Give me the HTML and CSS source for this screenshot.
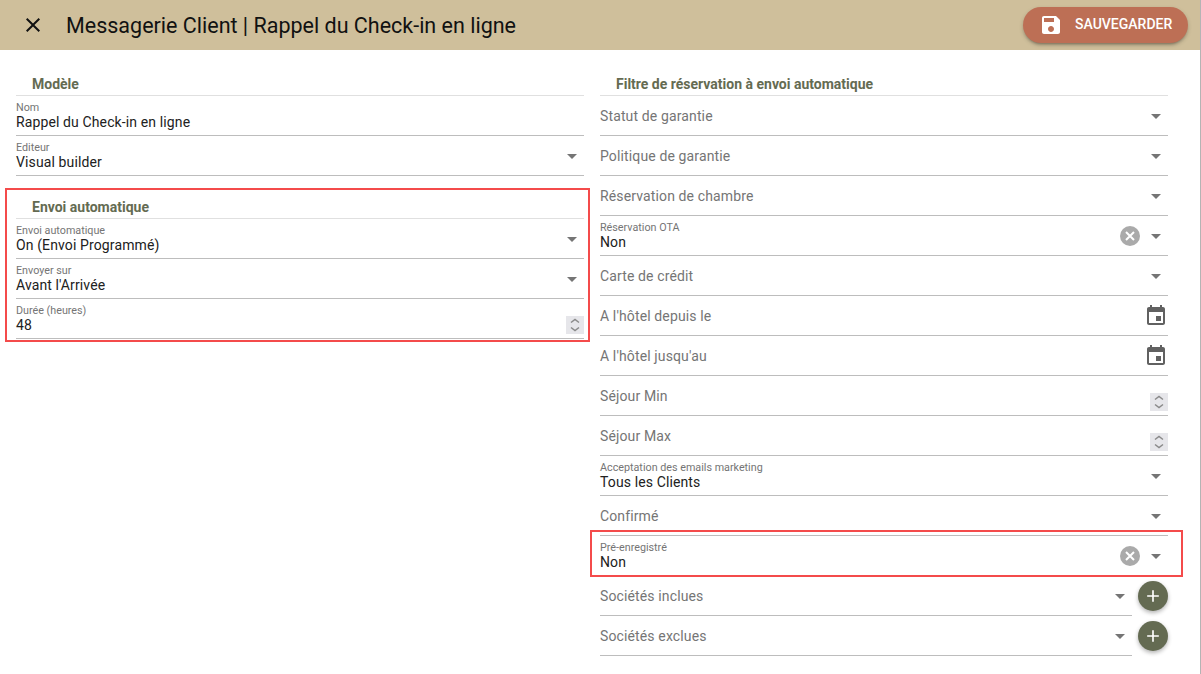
FILE: index.html
```html
<!DOCTYPE html>
<html lang="fr">
<head>
  <meta charset="UTF-8">
  <title>Messagerie Client | Rappel du Check-in en ligne</title>
  <link rel="stylesheet" href="styles.css">
</head>
<body>
  <header class="topbar">
    <svg class="close-icon" viewBox="0 0 24 24"><path d="M19 6.41 17.59 5 12 10.59 6.41 5 5 6.41 10.59 12 5 17.59 6.41 19 12 13.41 17.59 19 19 17.59 13.41 12z"/></svg>
    <h1>Messagerie Client | Rappel du Check-in en ligne</h1>
    <button class="save-btn">
      <svg viewBox="0 0 24 24"><path d="M17 3H5c-1.11 0-2 .9-2 2v14c0 1.1.89 2 2 2h14c1.1 0 2-.9 2-2V7l-4-4zm-5 16c-1.66 0-3-1.34-3-3s1.34-3 3-3 3 1.34 3 3-1.34 3-3 3zm3-10H5V5h10v4z"/></svg>
      <span>SAUVEGARDER</span>
    </button>
  </header>

  <main class="columns">
    <div class="column">
      <h2 class="section-title">Modèle</h2>
      <div class="field">
        <div class="field-text"><label>Nom</label><span class="value">Rappel du Check-in en ligne</span></div>
      </div>
      <div class="field">
        <div class="field-text"><label>Editeur</label><span class="value">Visual builder</span></div>
        <i class="arrow"></i>
      </div>

      <section class="auto-send">
        <div class="highlight"></div>
        <h2 class="section-title">Envoi automatique</h2>
        <div class="field">
          <div class="field-text"><label>Envoi automatique</label><span class="value">On (Envoi Programmé)</span></div>
          <i class="arrow"></i>
        </div>
        <div class="field">
          <div class="field-text"><label>Envoyer sur</label><span class="value">Avant l'Arrivée</span></div>
          <i class="arrow"></i>
        </div>
        <div class="field">
          <div class="field-text"><label>Durée (heures)</label><span class="value">48</span></div>
          <div class="spinner"><svg viewBox="0 0 18 18"><path d="M5 6.500 9 3.500l4 3M5 11.500l4 3 4-3"/></svg></div>
        </div>
      </section>
    </div>

    <div class="column">
      <h2 class="section-title">Filtre de réservation à envoi automatique</h2>
      <div class="field"><span class="placeholder">Statut de garantie</span><i class="arrow"></i></div>
      <div class="field"><span class="placeholder">Politique de garantie</span><i class="arrow"></i></div>
      <div class="field"><span class="placeholder">Réservation de chambre</span><i class="arrow"></i></div>
      <div class="field">
        <div class="field-text"><label>Réservation OTA</label><span class="value">Non</span></div>
        <svg class="clear" viewBox="0 0 20 20"><circle cx="10" cy="10" r="10"/><path d="M6 6l8 8M14 6l-8 8"/></svg>
        <i class="arrow"></i>
      </div>
      <div class="field"><span class="placeholder">Carte de crédit</span><i class="arrow"></i></div>
      <div class="field">
        <span class="placeholder">A l'hôtel depuis le</span>
        <svg class="calendar" viewBox="0 0 24 24"><path d="M19 3h-1V1h-2v2H8V1H6v2H5c-1.110 0-2 .9-2 2v14c0 1.100.89 2 2 2h14c1.100 0 2-.9 2-2V5c0-1.100-.9-2-2-2zm0 16H5V8h14v11zM12 12h5v5h-5z"/></svg>
      </div>
      <div class="field">
        <span class="placeholder">A l'hôtel jusqu'au</span>
        <svg class="calendar" viewBox="0 0 24 24"><path d="M19 3h-1V1h-2v2H8V1H6v2H5c-1.110 0-2 .9-2 2v14c0 1.100.89 2 2 2h14c1.100 0 2-.9 2-2V5c0-1.100-.9-2-2-2zm0 16H5V8h14v11zM12 12h5v5h-5z"/></svg>
      </div>
      <div class="field">
        <span class="placeholder">Séjour Min</span>
        <div class="spinner"><svg viewBox="0 0 18 18"><path d="M5 6.500 9 3.500l4 3M5 11.500l4 3 4-3"/></svg></div>
      </div>
      <div class="field">
        <span class="placeholder">Séjour Max</span>
        <div class="spinner"><svg viewBox="0 0 18 18"><path d="M5 6.500 9 3.500l4 3M5 11.500l4 3 4-3"/></svg></div>
      </div>
      <div class="field">
        <div class="field-text"><label>Acceptation des emails marketing</label><span class="value">Tous les Clients</span></div>
        <i class="arrow"></i>
      </div>
      <div class="field"><span class="placeholder">Confirmé</span><i class="arrow"></i></div>
      <div class="field marked">
        <div class="highlight"></div>
        <div class="field-text"><label>Pré-enregistré</label><span class="value">Non</span></div>
        <svg class="clear" viewBox="0 0 20 20"><circle cx="10" cy="10" r="10"/><path d="M6 6l8 8M14 6l-8 8"/></svg>
        <i class="arrow"></i>
      </div>
      <div class="add-row">
        <div class="field"><span class="placeholder">Sociétés inclues</span><i class="arrow"></i></div>
        <button class="add-btn"><svg viewBox="0 0 24 24"><path d="M19 13h-6v6h-2v-6H5v-2h6V5h2v6h6z"/></svg></button>
      </div>
      <div class="add-row">
        <div class="field"><span class="placeholder">Sociétés exclues</span><i class="arrow"></i></div>
        <button class="add-btn"><svg viewBox="0 0 24 24"><path d="M19 13h-6v6h-2v-6H5v-2h6V5h2v6h6z"/></svg></button>
      </div>
    </div>
  </main>
</body>
</html>
```

FILE: styles.css
```css
* {
  box-sizing: border-box;
}
body {
  margin: 0;
  height: 674px;
  overflow: hidden;
  background: #fff;
  border-right: 1px solid #b4b4b4;
  font-family: Roboto, "Liberation Sans", sans-serif;
  color: #212121;
}
.topbar {
  height: 50px;
  background: #cfbf9b;
  display: flex;
  align-items: center;
  padding: 0 12px 0 21px;
}
.close-icon {
  width: 24px;
  height: 24px;
  fill: #111;
}
.topbar h1 {
  margin: 0 0 0 21px;
  font-size: 21.5px;
  font-weight: 400;
  color: #111;
  flex-grow: 1;
}
.save-btn {
  width: 165px;
  height: 36px;
  background: #bd6f55;
  color: #fff;
  border: none;
  border-radius: 18px;
  box-shadow: 0 3px 3px -2px rgba(0, 0, 0, 0.3), 0 2px 4px rgba(0, 0, 0, 0.2);
  display: flex;
  align-items: center;
  padding: 0 0 0 16px;
  font-family: inherit;
  font-size: 14px;
  font-weight: 500;
}
.save-btn svg {
  width: 24px;
  height: 24px;
  fill: #fff;
  margin-right: 12px;
}
.save-btn span {
  margin-bottom: 3px;
}
.columns {
  display: grid;
  grid-template-columns: 568px 568px;
  gap: 16px;
  padding: 25px 0 0 16px;
}
.section-title {
  margin: 0;
  height: 21px;
  padding-left: 16px;
  font-size: 14px;
  line-height: 19px;
  font-weight: 700;
  color: #646b52;
  border-bottom: 1px solid #e0e0e0;
}
.field {
  height: 40px;
  display: flex;
  align-items: center;
  justify-content: space-between;
  border-bottom: 1px solid #bdbdbd;
  position: relative;
}
.field-text {
  display: flex;
  flex-direction: column;
  flex-grow: 1;
  padding-top: 1px;
}
.field-text label {
  font-size: 10.75px;
  line-height: 12px;
  color: #757575;
}
.value {
  font-size: 14px;
  line-height: 17px;
  letter-spacing: 0.12px;
  color: #212121;
}
.placeholder {
  flex-grow: 1;
  font-size: 14px;
  letter-spacing: 0.13px;
  color: #757575;
}
.arrow {
  width: 0;
  height: 0;
  margin: 2px 7px 0 0;
  border-left: 5px solid transparent;
  border-right: 5px solid transparent;
  border-top: 5px solid #757575;
}
.clear {
  width: 20px;
  height: 20px;
  margin-right: 11px;
}
.clear circle {
  fill: #aaa;
}
.clear path {
  stroke: #fff;
  stroke-width: 2;
  fill: none;
}
.calendar {
  width: 24px;
  height: 24px;
  fill: #616161;
}
.spinner {
  width: 18px;
  height: 18px;
  margin-top: 13px;
  background: #e6e6ea;
}
.spinner svg {
  display: block;
  width: 18px;
  height: 18px;
  fill: none;
  stroke: #8a8a8a;
  stroke-width: 1.5;
}
.auto-send {
  position: relative;
  margin-top: 22px;
}
.highlight {
  position: absolute;
  border: 2px solid #f44b4b;
  pointer-events: none;
}
.auto-send .highlight {
  inset: -10px -6px -3px -11px;
}
.marked .highlight {
  inset: -6px -15px -2px -10px;
}
.add-row {
  display: flex;
  align-items: center;
  gap: 6px;
}
.add-row .field {
  flex-grow: 1;
}
.add-btn {
  width: 30px;
  height: 30px;
  flex-shrink: 0;
  padding: 0;
  border: none;
  border-radius: 50%;
  background: #646b52;
  box-shadow: 0 2px 4px rgba(0, 0, 0, 0.3);
  display: flex;
  align-items: center;
  justify-content: center;
}
.add-btn svg {
  width: 20px;
  height: 20px;
  fill: #fff;
}
```
